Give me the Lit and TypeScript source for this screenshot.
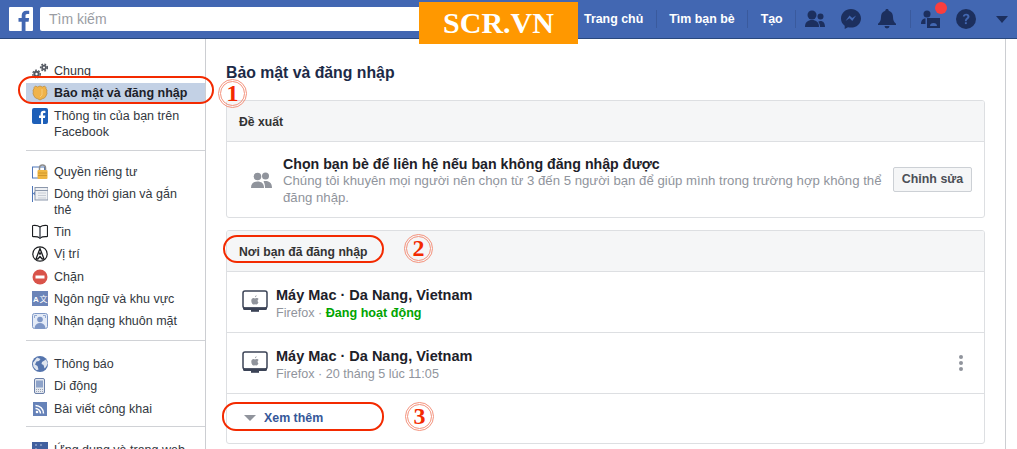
import { LitElement, html, css, svg } from 'lit';
import { customElement } from 'lit/decorators.js';

const icons: Record<string, unknown> = {
  gears: svg`<g fill="#555a63"><circle cx="4.500" cy="11" r="3.200"/><circle cx="12" cy="4.500" r="2.800"/><g stroke="#555a63" stroke-width="1.400" stroke-dasharray="1.800 1.400" fill="none"><circle cx="4.500" cy="11" r="3.800"/><circle cx="12" cy="4.500" r="3.400"/></g></g><circle cx="4.500" cy="11" r="1.200" fill="#fff"/><circle cx="12" cy="4.500" r="1" fill="#fff"/>`,
  shield: svg`<path d="M3.500 1 5.500 2 8 1l2.500 1 2-1 1.500 1.500V4l1 1-.3 2 .3 1.500-1 2.500-1.500 2-2 .7L8 15l-2.500-1.300-2-.7L2 11 1 8.500 1.300 7 1 5l1-1V2.500z" fill="#f0b34a" stroke="#b98a3c" stroke-width=".7"/><path d="M10 4v6l-2 2" fill="none" stroke="#f7d28c" stroke-width=".8"/>`,
  fb: svg`<rect x="0" y="0" width="16" height="16" rx="2" fill="#1d5fb8"/><path d="M11 16v-6h2l.3-2.400H11V6.200c0-.7.2-1.200 1.200-1.200h1.200V2.900c-.2 0-.9-.1-1.800-.1-1.800 0-3 1.100-3 3.100v1.700H7V10h2.100v6z" fill="#fff"/>`,
  lock: svg`<rect x=".5" y="3" width="12" height="11" fill="#fff" stroke="#4e76b8"/><path d="M7.500 6V4a3 3 0 0 1 6 0v2" fill="none" stroke="#8d8d8d" stroke-width="1.500"/><rect x="5.500" y="6" width="10" height="9" rx="1" fill="#efb642"/><path d="M6 9h9M6 11.500h9" stroke="#c98f27" stroke-width=".8"/>`,
  timeline: svg`<path d="M.5 0v16" stroke="#4e76b8"/><path d="M.8 7.500 3 5.500v4z" fill="#4e76b8"/><rect x="3" y="1.500" width="13" height="12.500" fill="#eef0f3" stroke="#8b97ab"/><path d="M3 4.500h13" stroke="#8b97ab"/><path d="M6 7h8M6 9.500h8M6 12h8" stroke="#c7ccd4"/>`,
  book: svg`<path d="M8 3C6 1.500 3.500 1.200 1 1.500c-.5 0-.5.400-.5.800V12c0 .5.300.7.800.7 2.500-.2 4.700.1 6.700 1.300 2-1.200 4.200-1.500 6.700-1.300.5 0 .8-.2.800-.7V2.300c0-.4 0-.8-.5-.8C12.500 1.200 10 1.500 8 3z" fill="#fff" stroke="#1c1e21" stroke-width="1.200"/><path d="M8 3v12" stroke="#50565f" stroke-width="1.500"/>`,
  pin: svg`<circle cx="8" cy="8" r="7.200" fill="#fff" stroke="#1c1e21" stroke-width="1.200"/><path d="M8 2.500 4 13h1.800L8 10.500l2.200 2.500H12z" fill="none" stroke="#1c1e21" stroke-width="1.300"/><circle cx="8" cy="7.500" r="1.200" fill="#1c1e21"/>`,
  block: svg`<circle cx="8" cy="8" r="7.500" fill="#d9534a"/><rect x="3.500" y="6.500" width="9" height="3" fill="#fff"/>`,
  lang: svg`<rect width="16" height="15" fill="#6b84b8"/><text x="1" y="11" font-size="8" font-weight="700" fill="#fff" font-family="Liberation Sans">A</text><text x="7.500" y="11" font-size="8" fill="#fff" font-family="Noto Sans CJK SC">文</text>`,
  face: svg`<rect x=".5" y=".5" width="15" height="15" rx="2" fill="#e3eaf6" stroke="#7f98c6"/><circle cx="8" cy="6.500" r="2.800" fill="#7d96c6"/><path d="M2.500 15c.5-3.500 2.800-5 5.500-5s5 1.500 5.500 5z" fill="#7d96c6"/><path d="M2.500 5V2.500H5M11 2.500h2.500V5" fill="none" stroke="#7f98c6" stroke-width=".8"/>`,
  globe: svg`<circle cx="8" cy="8" r="8" fill="#5474ad"/><path d="M5 1.500 8.500 3 7 5 4.500 5.500 3 8.500 5.500 10l1 3.500-2 .8L1.500 11 .8 7zM10 6l4-2.500 1.800 4L14 11l-1.500 1.500L11.500 9 9.500 8z" fill="#dfe5ef"/>`,
  phone: svg`<rect x="2.500" y=".5" width="10" height="15" rx="1.500" fill="#e4e8ef" stroke="#6a7fa8"/><rect x="4" y="2.500" width="7" height="7" fill="#8ea3c9"/><path d="M4 11.500h7M4 13.500h7" stroke="#9aa3b3" stroke-dasharray="1 1"/>`,
  rss: svg`<rect width="14" height="14" x="1" y="1" fill="#6682b8"/><circle cx="5" cy="11" r="1.300" fill="#fff"/><path d="M3.500 7.500a5 5 0 0 1 5 5M3.500 4.500a8 8 0 0 1 8 8" fill="none" stroke="#fff" stroke-width="1.500"/>`,
  apps: svg`<rect width="16" height="16" fill="#41609f"/><path d="M3 3h2M8 3h2M3 7h2" stroke="#b7c4dd"/>`,
};

interface NavRow {
  icon: string;
  label: string;
  active?: boolean;
}

const navGroups: NavRow[][] = [
  [
    { icon: 'gears', label: 'Chung' },
    { icon: 'shield', label: 'Bảo mật và đăng nhập', active: true },
    { icon: 'fb', label: 'Thông tin của bạn trên Facebook' },
  ],
  [
    { icon: 'lock', label: 'Quyền riêng tư' },
    { icon: 'timeline', label: 'Dòng thời gian và gắn thẻ' },
    { icon: 'book', label: 'Tin' },
    { icon: 'pin', label: 'Vị trí' },
    { icon: 'block', label: 'Chặn' },
    { icon: 'lang', label: 'Ngôn ngữ và khu vực' },
    { icon: 'face', label: 'Nhận dạng khuôn mặt' },
  ],
  [
    { icon: 'globe', label: 'Thông báo' },
    { icon: 'phone', label: 'Di động' },
    { icon: 'rss', label: 'Bài viết công khai' },
  ],
  [{ icon: 'apps', label: 'Ứng dụng và trang web' }],
];

const navLinks = ['Trang chủ', 'Tìm bạn bè', 'Tạo'];

const monitor = html`<svg class="monitor" width="26" height="24" viewBox="0 0 26 24">
  <rect x="1" y="1" width="24" height="17" rx="2" fill="#fff" stroke="#3b4356" stroke-width="1.500"/>
  <path d="M1 17.500h24v1a1.500 1.500 0 0 1-1.500 1.500h-21A1.500 1.500 0 0 1 1 18.500z" fill="#3b4356"/>
  <rect x="9" y="20" width="8" height="1.800" fill="#3b4356"/>
  <path d="M16.300 12.600c-.5 1.100-1.100 2-1.800 2-.6 0-.8-.4-1.500-.4s-.9.400-1.500.4c-.9 0-2.200-2-2.200-3.900 0-1.700 1.100-2.600 2.100-2.600.7 0 1.200.4 1.600.4s1-.5 1.800-.4c.5 0 1.300.2 1.800 1-1.500 1-1.200 2.900.2 3.500zM13 7.200c-.1-.9.700-1.900 1.600-2 .1 1-.8 2-1.600 2z" fill="#90949c"/>
</svg>`;

@customElement('app-root')
export class AppRoot extends LitElement {
  static styles = css`
    :host {
      display: block;
      position: relative;
      width: 1017px;
      height: 449px;
      overflow: hidden;
      background: #fff;
      font-family: "Liberation Sans", Arial, sans-serif;
      font-size: 12.5px;
      color: #1d2129;
    }

    .topbar {
      display: flex;
      align-items: center;
      height: 38px;
      padding-left: 9px;
      background: #4267b2;
      border-bottom: 1px solid #29487d;
    }
    .logo {
      display: block;
      flex: none;
      margin-right: 7px;
    }
    .search {
      display: flex;
      align-items: center;
      box-sizing: border-box;
      width: 530px;
      height: 24px;
      padding-left: 9px;
      border-radius: 2px 0 0 2px;
      background: #fff;
      color: #9a9da3;
      font-size: 14px;
    }
    .toplinks {
      display: flex;
      align-items: center;
      margin-left: 14px;
      color: #fff;
      font-weight: 700;
      font-size: 12.4px;
    }
    .toplink {
      padding: 0 12.5px;
      border-right: 1px solid #3a5a9d;
      line-height: 18px;
    }
    .toplink:first-child {
      padding-left: 0;
    }
    .topicons {
      display: flex;
      align-items: center;
    }
    .topicons svg {
      display: block;
    }
    .topsep {
      width: 1px;
      height: 18px;
      background: #3a5a9d;
    }

    .layout {
      display: flex;
      height: 410px;
    }
    .sidebar {
      flex: none;
      box-sizing: border-box;
      width: 180px;
      margin-left: 26px;
      padding-top: 21px;
      border-right: 1px solid #ccced2;
      color: #333840;
    }
    .navgroup {
      display: flex;
      flex-direction: column;
      gap: 0.25px;
      padding-bottom: 8px;
      margin-bottom: 10px;
      border-bottom: 1px solid #d0d2d6;
    }
    .navgroup:first-child {
      padding-bottom: 7px;
    }
    .navgroup:nth-child(2) {
      margin-bottom: 12px;
    }
    .navgroup:nth-child(3) {
      padding-bottom: 6px;
      margin-bottom: 12px;
    }
    .navrow {
      display: flex;
      align-items: flex-start;
      padding: 3px 20px 3px 6px;
      line-height: 16px;
    }
    .navrow.active {
      padding-top: 2px;
      padding-bottom: 2px;
      margin: 1px 0;
      background: #c3d1e5;
      color: #1d2129;
      font-weight: 700;
      white-space: nowrap;
    }
    .navrow svg {
      flex: none;
      margin-right: 6px;
    }

    .content {
      flex: none;
      box-sizing: border-box;
      width: 800px;
      height: 410px;
      padding: 24px 20px 0 20px;
      border-right: 1px solid #ccced2;
    }
    h1 {
      margin: 0 0 17px;
      font-size: 15.8px;
      line-height: 20px;
      font-weight: 700;
      color: #1c2a47;
    }
    .card {
      margin-bottom: 12px;
      border: 1px solid #dddfe2;
      border-radius: 3px;
      overflow: hidden;
    }
    .cardhead {
      display: flex;
      align-items: center;
      box-sizing: border-box;
      height: 41px;
      padding: 1px 0 0 12px;
      background: #f5f6f7;
      border-bottom: 1px solid #dddfe2;
      font-size: 12.2px;
      font-weight: 700;
      color: #333;
    }
    .suggest {
      display: flex;
      align-items: center;
      height: 75px;
      padding: 0 12px 0 24px;
    }
    .suggest .people {
      flex: none;
      margin-right: 11px;
    }
    .suggest .text {
      flex: 1;
      margin-right: 8px;
      padding-top: 2px;
    }
    .suggest .title {
      font-size: 14.2px;
    }
    .suggest .sub {
      font-size: 13.2px;
      line-height: 16.5px;
    }
    .title {
      font-size: 14.5px;
      line-height: 18px;
      font-weight: 700;
      color: #1d2129;
    }
    .sub {
      font-size: 12.6px;
      line-height: 16px;
      color: #90949c;
    }
    .button {
      flex: none;
      box-sizing: border-box;
      width: 79px;
      height: 25px;
      line-height: 23px;
      text-align: center;
      background: #f5f6f7;
      border: 1px solid #ccd0d5;
      border-radius: 2px;
      font-size: 12.4px;
      font-weight: 700;
      color: #4b4f56;
    }
    .session {
      display: flex;
      align-items: center;
      height: 60px;
      padding: 0 21px 0 15px;
      border-bottom: 1px solid #dddfe2;
    }
    .session .monitor {
      flex: none;
      margin-right: 8px;
    }
    .session .text {
      flex: 1;
      padding-top: 2px;
    }
    .session .sub {
      padding-top: 1px;
    }
    .live {
      color: #00a400;
      font-weight: 700;
    }
    .dots {
      display: flex;
      flex-direction: column;
      gap: 2px;
    }
    .dots span {
      width: 4px;
      height: 4px;
      border-radius: 50%;
      background: #90949c;
    }
    .more {
      display: flex;
      align-items: center;
      box-sizing: border-box;
      height: 49px;
      padding: 0 0 1px 17px;
      font-size: 12.4px;
      font-weight: 700;
      color: #365899;
    }
    .more i {
      width: 0;
      height: 0;
      margin-right: 8px;
      border-left: 6px solid transparent;
      border-right: 6px solid transparent;
      border-top: 6px solid #90949c;
    }

    /* red dot on the requests icon */
    .badge {
      position: absolute;
      left: 935px;
      top: 2px;
      width: 12px;
      height: 12px;
      border-radius: 50%;
      background: #fa3e3e;
    }
    /* orange watermark pasted over the top bar */
    .brand {
      position: absolute;
      left: 419px;
      top: 2px;
      width: 159px;
      height: 42px;
      background: #ff9800;
      color: #fff;
      font: 700 30px/42px "Liberation Serif", serif;
      text-align: center;
    }
    /* red markup drawn over the screenshot */
    .ring {
      position: absolute;
      box-sizing: border-box;
      border: 2px solid #f32a00;
      border-radius: 14px;
    }
    .num {
      position: absolute;
      box-sizing: border-box;
      width: 29px;
      height: 29px;
      border: 3px double #f4927c;
      border-radius: 50%;
      color: #f32a00;
      font: 700 24px/23px "Liberation Serif", serif;
      text-align: center;
    }
  `;

  private navIcon(name: string) {
    return html`<svg width="16" height="16" viewBox="0 0 16 16">${icons[name]}</svg>`;
  }

  private renderTopIcons() {
    const dark = '#1c2f5e';
    return html`<div class="topicons">
      <svg style="margin-left:9px" width="20" height="18" viewBox="0 0 20 18">
        <circle cx="7" cy="5" r="4.500" fill="${dark}"/><path d="M0 17c0-5 3-7 7-7s7 2 7 7z" fill="${dark}"/>
        <circle cx="15.500" cy="6.500" r="3" fill="${dark}"/><path d="M15 17h5c0-4-1.800-6-4.500-6-1 0-1.700.2-2.300.7 1 1.300 1.800 3 1.800 5.300z" fill="${dark}"/>
      </svg>
      <svg style="margin-left:16px" width="20" height="20" viewBox="0 0 20 20">
        <path d="M10 0C4.500 0 0 4.200 0 9.400c0 3 1.400 5.600 3.700 7.300V20l3.300-1.800c1 .3 2 .4 3 .4 5.500 0 10-4.100 10-9.200S15.500 0 10 0z" fill="${dark}"/>
        <path d="m4.500 12 4-5.500 2.700 2.600 3.900-2.600-3.800 5.500-2.800-2.700z" fill="#4267b2"/>
      </svg>
      <svg style="margin-left:17px" width="18" height="20" viewBox="0 0 18 20">
        <path d="M9 0c1 0 1.700.7 1.700 1.700 3 .8 4.300 3.300 4.300 6.300 0 3.500 1 5 3 6.700V16H0v-1.300C2 13 3 11.500 3 8c0-3 1.300-5.500 4.300-6.300C7.300.7 8 0 9 0zM6.500 17h5a2.500 2.500 0 0 1-5 0z" fill="${dark}"/>
      </svg>
      <span class="topsep" style="margin-left:14px"></span>
      <svg style="margin-left:10px" width="20" height="20" viewBox="0 0 20 20">
        <circle cx="6" cy="5" r="3.500" fill="${dark}"/><path d="M0 15c0-4 2-5.500 4.500-5.500V15z" fill="${dark}"/>
        <path d="M6 9h13v10H6zm3 8h7c0-2-1.300-3-3.500-3S9 15 9 17z" fill="${dark}" fill-rule="evenodd"/>
        <circle cx="12.500" cy="11.500" r="1.800" fill="${dark}"/>
      </svg>
      <svg style="margin-left:15px" width="20" height="20" viewBox="0 0 20 20">
        <circle cx="10" cy="10" r="10" fill="${dark}"/>
        <path d="M6.800 7.600C7 5.500 8.500 4.700 10.200 4.700c2 0 3.300 1.100 3.300 2.800 0 2.600-2.800 2.600-2.800 4.700H8.900c0-3 2.500-3.200 2.500-4.700 0-.7-.5-1.100-1.300-1.100-.9 0-1.300.5-1.400 1.200z" fill="#4267b2"/>
        <rect x="8.900" y="13.200" width="1.900" height="1.900" fill="#4267b2"/>
      </svg>
      <svg style="margin-left:20px" width="12" height="7" viewBox="0 0 12 7"><path d="M0 0h12L6 7z" fill="${dark}"/></svg>
    </div>`;
  }

  render() {
    return html`
      <header class="topbar">
        <svg class="logo" width="24" height="24" viewBox="0 0 24 24">
          <path d="M1 0h22a1 1 0 0 1 1 1v22a1 1 0 0 1-1 1h-6.500v-9.300h3.100l.5-3.600h-3.600V8.800c0-1 .3-1.800 1.800-1.800h1.900V3.800c-.3 0-1.500-.1-2.800-.1-2.800 0-4.700 1.700-4.700 4.800v2.600H9.500v3.600h3.200V24H1a1 1 0 0 1-1-1V1a1 1 0 0 1 1-1z" fill="#fff"/>
        </svg>
        <div class="search">Tìm kiếm</div>
        <nav class="toplinks">
          ${navLinks.map((l) => html`<span class="toplink">${l}</span>`)}
        </nav>
        ${this.renderTopIcons()}
      </header>

      <div class="layout">
        <aside class="sidebar">
          ${navGroups.map(
            (group) => html`<div class="navgroup">
              ${group.map(
                (row) => html`<div class="navrow ${row.active ? 'active' : ''}">
                  ${this.navIcon(row.icon)}<span>${row.label}</span>
                </div>`,
              )}
            </div>`,
          )}
        </aside>

        <main class="content">
          <h1>Bảo mật và đăng nhập</h1>

          <section class="card">
            <div class="cardhead">Đề xuất</div>
            <div class="suggest">
              <svg class="people" width="21" height="16" viewBox="0 0 21 16">
                <circle cx="6.500" cy="4.500" r="3.800" fill="#90949c"/><path d="M0 16c0-4.500 2.500-6.500 6.500-6.500s6.500 2 6.500 6.500z" fill="#90949c"/>
                <circle cx="14.500" cy="4" r="3.500" fill="#90949c"/><path d="M14 16h7c0-5-2.500-7-6.500-7-1 0-1.500.1-2 .4 1 1.500 1.500 3.500 1.500 6.600z" fill="#90949c"/>
              </svg>
              <div class="text">
                <div class="title">Chọn bạn bè để liên hệ nếu bạn không đăng nhập được</div>
                <div class="sub">Chúng tôi khuyên mọi người nên chọn từ 3 đến 5 người bạn để giúp mình trong trường hợp không thể đăng nhập.</div>
              </div>
              <div class="button">Chỉnh sửa</div>
            </div>
          </section>

          <section class="card">
            <div class="cardhead">Nơi bạn đã đăng nhập</div>
            <div class="session">
              ${monitor}
              <div class="text">
                <div class="title">Máy Mac · Da Nang, Vietnam</div>
                <div class="sub">Firefox · <span class="live">Đang hoạt động</span></div>
              </div>
            </div>
            <div class="session">
              ${monitor}
              <div class="text">
                <div class="title">Máy Mac · Da Nang, Vietnam</div>
                <div class="sub">Firefox · 20 tháng 5 lúc 11:05</div>
              </div>
              <div class="dots"><span></span><span></span><span></span></div>
            </div>
            <div class="more"><i></i>Xem thêm</div>
          </section>
        </main>
      </div>

      <span class="badge"></span>
      <div class="brand">SCR.VN</div>
      <span class="ring" style="left:18px;top:76px;width:196px;height:28px"></span>
      <span class="ring" style="left:223px;top:235px;width:161px;height:28px"></span>
      <span class="ring" style="left:222px;top:402px;width:162px;height:29px"></span>
      <span class="num" style="left:218px;top:79px">1</span>
      <span class="num" style="left:404px;top:234px">2</span>
      <span class="num" style="left:405px;top:402px">3</span>
    `;
  }
}
